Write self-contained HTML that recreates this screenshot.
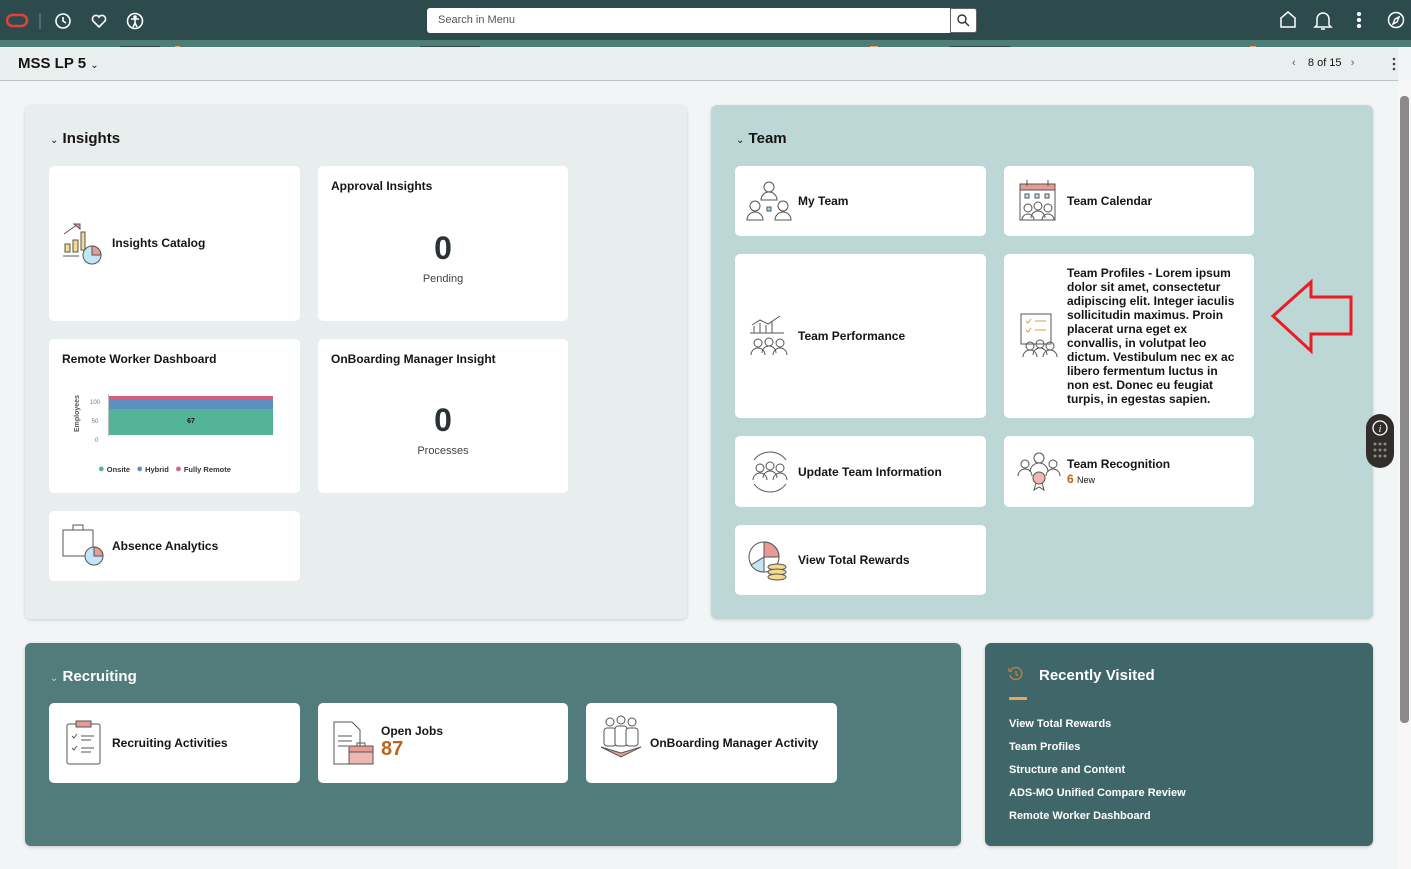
<!DOCTYPE html>
<html><head><meta charset="utf-8">
<style>
*{box-sizing:border-box;margin:0;padding:0}
body{width:1411px;height:869px;overflow:hidden;background:#f2f5f5;font-family:"Liberation Sans",sans-serif;position:relative;color:#161513}
.a{position:absolute}
.top{left:0;top:0;width:1411px;height:40px;background:#2d4a4d}
.strip{left:0;top:40px;width:1411px;height:7px;background:#4e7d78}
.hdr{left:0;top:47px;width:1398px;height:34px;background:#e8efee;border-bottom:1px solid #b8c2c2}
.panel{border-radius:6px}
.tile{background:#fff;border-radius:5px;position:absolute}
.tt{font-size:12px;font-weight:bold;color:#161513}
.sec{font-size:15px;font-weight:bold}
.rv a{display:block;color:#fff;font-size:11px;font-weight:bold;margin-bottom:10px;text-decoration:none}
</style></head><body>
<div class="a top"></div>
<div class="a strip">
<svg width="1411" height="7"><g fill="#e8a45a"><rect x="175" y="0" width="5" height="7"/><rect x="590" y="2" width="30" height="5"/><rect x="870" y="0" width="8" height="7"/><rect x="1250" y="0" width="6" height="7"/></g><g fill="#a9c7bf"><rect x="60" y="2" width="30" height="5"/><rect x="380" y="3" width="20" height="4"/><rect x="720" y="2" width="30" height="5"/><rect x="1150" y="1" width="25" height="6"/></g><g fill="#2d4a4d"><rect x="120" y="0" width="40" height="3"/><rect x="420" y="0" width="60" height="3"/><rect x="950" y="0" width="60" height="3"/></g></svg>
</div>
<!-- top bar icons -->
<svg class="a" style="left:6px;top:11px" width="160" height="20" fill="none" stroke="#fff" stroke-width="1.6">
<rect x="1" y="4" width="20" height="11" rx="5.5" stroke="#e0433a" stroke-width="2.5"/>
<line x1="34" y1="2" x2="34" y2="18" stroke="#7b8c8c" stroke-width="1"/>
<circle cx="57" cy="10" r="7"/><path d="M57 6v4l3 2"/>
<path d="M93 16l-6-6a3.5 3.5 0 0 1 6-4a3.5 3.5 0 0 1 6 4z"/>
<circle cx="129" cy="10" r="7.5"/><circle cx="129" cy="6" r="1" fill="#fff"/><path d="M125 8h8M129 8v4l-2 4M129 12l2 4"/>
</svg>
<div class="a" style="left:427px;top:8px;width:524px;height:25px;background:#fff;border-radius:3px 0 0 3px;font-size:11px;color:#555;padding:6px 11px">Search in Menu</div>
<div class="a" style="left:950px;top:8px;width:27px;height:25px;background:#fff;border:1px solid #666;border-radius:0 3px 3px 0"></div>
<svg class="a" style="left:956px;top:13px" width="14" height="14" fill="none" stroke="#333" stroke-width="1.4"><circle cx="6" cy="6" r="4"/><path d="M9 9l4 4"/></svg>
<svg class="a" style="left:1275px;top:10px" width="130" height="22" fill="none" stroke="#fff" stroke-width="1.5">
<path d="M6 17V8l7-6 7 6v9z"/>
<path d="M42 15V9a6 6 0 0 1 12 0v6l2 2H40zM46 19h4"/>
<circle cx="84" cy="4" r="1.4" fill="#fff"/><circle cx="84" cy="10" r="1.4" fill="#fff"/><circle cx="84" cy="16" r="1.4" fill="#fff"/>
<circle cx="121" cy="10" r="7.5"/><path d="M124 7l-2 5-4 2 2-5z"/>
</svg>
<!-- header -->
<div class="a hdr"></div>
<div class="a" style="left:18px;top:55px;font-size:15px;font-weight:bold">MSS LP 5 <span style="font-size:10px;font-weight:normal">&#8964;</span></div>
<div class="a" style="left:1292px;top:57px;font-size:11px;color:#161513"><span style="color:#555">&lsaquo;</span>&nbsp;&nbsp;&nbsp; 8 of 15 &nbsp;&nbsp;<span style="color:#555">&rsaquo;</span></div>
<svg class="a" style="left:1390px;top:56px" width="8" height="16" fill="#444"><circle cx="4" cy="3" r="1.3"/><circle cx="4" cy="8" r="1.3"/><circle cx="4" cy="13" r="1.3"/></svg>
<!-- scrollbar -->
<div class="a" style="left:1398px;top:81px;width:13px;height:788px;background:#f7f7f7"></div>
<div class="a" style="left:1400px;top:96px;width:9px;height:627px;background:#8a8a8a;border-radius:4px"></div>

<!-- Insights -->
<div class="a panel" style="left:25px;top:105px;width:662px;height:514px;background:#e8eeed;box-shadow:0 1px 3px rgba(0,0,0,.15)"></div>
<div class="a sec" style="left:50px;top:130px"><span style="font-size:10px;font-weight:normal">&#8964;</span> Insights</div>
<div class="tile" style="left:49px;top:166px;width:251px;height:155px"></div>
<svg class="a" style="left:62px;top:222px" width="42" height="44" fill="none" stroke="#555" stroke-width="1"><path d="M2 12l14-10" /><path d="M12 2h6v5z" fill="#e89a94"/><rect x="3" y="22" width="5" height="8" fill="#f6da8c"/><rect x="11" y="18" width="5" height="12" fill="#f6da8c"/><rect x="19" y="10" width="4" height="18" fill="#f6da8c"/><path d="M1 34h16"/><circle cx="30" cy="33" r="9" fill="#c2e5f7"/><path d="M30 24v9h9a9 9 0 0 0-9-9z" fill="#e89a94"/></svg>
<div class="a tt" style="left:112px;top:236px">Insights Catalog</div>
<div class="tile" style="left:318px;top:166px;width:250px;height:155px"></div>
<div class="a tt" style="left:331px;top:179px">Approval Insights</div>
<div class="a" style="left:318px;top:230px;width:250px;text-align:center;font-size:32px;font-weight:bold;color:#2b3236">0</div>
<div class="a" style="left:318px;top:273px;width:250px;text-align:center;font-size:11px;color:#444">Pending</div>
<div class="tile" style="left:49px;top:339px;width:251px;height:154px"></div>
<div class="a tt" style="left:62px;top:352px">Remote Worker Dashboard</div>
<div class="a" style="left:74px;top:390px;font-size:7px;font-weight:bold;color:#555;transform:rotate(-90deg);transform-origin:0 0;top:432px">Employees</div>
<div class="a" style="left:90px;top:394px;font-size:6px;color:#777;line-height:19px">100<br>&nbsp;50<br>&nbsp;&nbsp;&nbsp;0</div>
<div class="a" style="left:109px;top:396px;width:164px;height:3px;background:#d4607f"></div>
<div class="a" style="left:109px;top:399px;width:164px;height:10px;background:#5d8fc0"></div>
<div class="a" style="left:109px;top:409px;width:164px;height:26px;background:#52b397;font-size:7px;text-align:center;line-height:26px;font-weight:bold">67</div>
<div class="a" style="left:108px;top:394px;width:1px;height:42px;background:#bbb"></div>
<div class="a" style="left:98px;top:463px;font-size:7.5px;color:#333;font-weight:bold"><span style="color:#52b397;font-size:11px">&#9679;</span> Onsite &nbsp;&nbsp;<span style="color:#5d8fc0;font-size:11px">&#9679;</span> Hybrid &nbsp;&nbsp;<span style="color:#d4607f;font-size:11px">&#9679;</span> Fully Remote</div>
<div class="tile" style="left:318px;top:339px;width:250px;height:154px"></div>
<div class="a tt" style="left:331px;top:352px">OnBoarding Manager Insight</div>
<div class="a" style="left:318px;top:402px;width:250px;text-align:center;font-size:32px;font-weight:bold;color:#2b3236">0</div>
<div class="a" style="left:318px;top:445px;width:250px;text-align:center;font-size:11px;color:#444">Processes</div>
<div class="tile" style="left:49px;top:511px;width:251px;height:70px"></div>
<svg class="a" style="left:61px;top:522px" width="44" height="46" fill="none" stroke="#555" stroke-width="1"><rect x="2" y="8" width="30" height="26" fill="#fff"/><path d="M12 8V3h10v5"/><circle cx="33" cy="34" r="9" fill="#c2e5f7"/><path d="M33 25v9h9a9 9 0 0 0-9-9z" fill="#e89a94"/></svg>
<div class="a tt" style="left:112px;top:539px">Absence Analytics</div>

<!-- Team -->
<div class="a panel" style="left:711px;top:105px;width:662px;height:514px;background:#bcd7d6;box-shadow:0 1px 3px rgba(0,0,0,.15)"></div>
<div class="a sec" style="left:736px;top:130px"><span style="font-size:10px;font-weight:normal">&#8964;</span> Team</div>
<div class="tile" style="left:735px;top:166px;width:251px;height:70px"></div>
<svg class="a" style="left:746px;top:180px" width="46" height="42" fill="none" stroke="#555" stroke-width="1"><circle cx="23" cy="7" r="5"/><path d="M15 20a8 8 0 0 1 16 0z"/><circle cx="9" cy="26" r="5"/><path d="M1 40a8 8 0 0 1 16 0z"/><circle cx="37" cy="26" r="5"/><path d="M29 40a8 8 0 0 1 16 0z"/><rect x="21" y="27" width="4" height="4" fill="#a6d3ef"/></svg>
<div class="a tt" style="left:798px;top:194px">My Team</div>
<div class="tile" style="left:1004px;top:166px;width:250px;height:70px"></div>
<svg class="a" style="left:1018px;top:180px" width="40" height="42" fill="none" stroke="#555" stroke-width="1"><rect x="2" y="4" width="35" height="36" fill="#fff"/><rect x="2" y="4" width="35" height="6" fill="#e89a94"/><rect x="7" y="14" width="4" height="4" fill="#c2e5f7"/><rect x="17" y="14" width="4" height="4" fill="#c2e5f7"/><rect x="27" y="14" width="4" height="4" fill="#c2e5f7"/><circle cx="10" cy="28" r="4"/><circle cx="20" cy="26" r="4"/><circle cx="30" cy="28" r="4"/><path d="M4 40a6 6 0 0 1 12 0M13 38a7 7 0 0 1 14 0M24 40a6 6 0 0 1 12 0"/><path d="M9 0v6M30 0v6"/></svg>
<div class="a tt" style="left:1067px;top:194px">Team Calendar</div>
<div class="tile" style="left:735px;top:254px;width:251px;height:164px"></div>
<svg class="a" style="left:748px;top:313px" width="42" height="44" fill="none" stroke="#555" stroke-width="1"><path d="M6 20V13M12 20V10M18 20V12M24 20V8M2 20h34M4 12l8-5 8 4 12-8"/><circle cx="10" cy="30" r="4"/><circle cx="21" cy="29" r="4"/><circle cx="32" cy="30" r="4"/><path d="M3 42a7 7 0 0 1 14 0M14 40a7 7 0 0 1 14 0M25 42a7 7 0 0 1 14 0"/></svg>
<div class="a tt" style="left:798px;top:329px">Team Performance</div>
<div class="tile" style="left:1004px;top:254px;width:250px;height:164px"></div>
<svg class="a" style="left:1018px;top:312px" width="42" height="46" fill="none" stroke="#555" stroke-width="1"><rect x="3" y="2" width="30" height="30" fill="#fff"/><path d="M8 9l2 2 3-4M8 18l2 2 3-4M17 9h11M17 18h11" stroke="#c9a24e"/><circle cx="12" cy="34" r="4"/><circle cx="22" cy="32" r="4"/><circle cx="32" cy="34" r="4"/><path d="M5 45a7 7 0 0 1 14 0M15 43a7 7 0 0 1 14 0M25 45a7 7 0 0 1 14 0"/></svg>
<div class="a tt" style="left:1067px;top:266px;width:170px;line-height:14px">Team Profiles - Lorem ipsum dolor sit amet, consectetur adipiscing elit. Integer iaculis sollicitudin maximus. Proin placerat urna eget ex convallis, in volutpat leo dictum. Vestibulum nec ex ac libero fermentum luctus in non est. Donec eu feugiat turpis, in egestas sapien.</div>
<div class="tile" style="left:735px;top:436px;width:251px;height:71px"></div>
<svg class="a" style="left:748px;top:448px" width="44" height="46" fill="none" stroke="#555" stroke-width="1"><path d="M6 12a20 20 0 0 1 32 0M38 36a20 20 0 0 1-32 0"/><circle cx="12" cy="20" r="4"/><circle cx="22" cy="18" r="4"/><circle cx="32" cy="20" r="4"/><path d="M5 32a7 7 0 0 1 14 0M15 30a7 7 0 0 1 14 0M25 32a7 7 0 0 1 14 0"/></svg>
<div class="a tt" style="left:798px;top:465px">Update Team Information</div>
<div class="tile" style="left:1004px;top:436px;width:250px;height:71px"></div>
<svg class="a" style="left:1016px;top:450px" width="46" height="42" fill="none" stroke="#555" stroke-width="1"><circle cx="23" cy="8" r="5"/><path d="M14 22a9 9 0 0 1 18 0"/><circle cx="9" cy="14" r="4"/><circle cx="37" cy="14" r="4"/><path d="M2 26a7 7 0 0 1 14 0M30 26a7 7 0 0 1 14 0"/><circle cx="23" cy="28" r="6" fill="#f0b7b1"/><path d="M20 33l-2 7 5-3 5 3-2-7"/></svg>
<div class="a tt" style="left:1067px;top:457px">Team Recognition</div>
<div class="a" style="left:1067px;top:472px;font-size:12px;font-weight:bold;color:#b9651b">6 <span style="font-size:9px;color:#161513;font-weight:normal">New</span></div>
<div class="tile" style="left:735px;top:525px;width:251px;height:70px"></div>
<svg class="a" style="left:746px;top:539px" width="46" height="42" fill="none" stroke="#555" stroke-width="1"><circle cx="18" cy="18" r="15" fill="#fff"/><path d="M18 18V3a15 15 0 0 1 15 15z" fill="#e89a94"/><path d="M18 18L5 26a15 15 0 0 0 13 7z" fill="#c2e5f7"/><ellipse cx="31" cy="28" rx="9" ry="3" fill="#f6da8c"/><ellipse cx="31" cy="33" rx="9" ry="3" fill="#f6da8c"/><ellipse cx="31" cy="38" rx="9" ry="3" fill="#f6da8c"/></svg>
<div class="a tt" style="left:798px;top:553px">View Total Rewards</div>
<svg class="a" style="left:1270px;top:278px" width="86" height="78"><polygon points="3,38 41,4 41,19 81,19 81,56 41,56 41,73" fill="none" stroke="#ec1c24" stroke-width="3"/></svg>
<div class="a" style="left:1366px;top:414px;width:28px;height:54px;background:#312d2a;border-radius:14px"></div>
<svg class="a" style="left:1370px;top:418px" width="20" height="46"><circle cx="10" cy="10" r="7" fill="none" stroke="#fff" stroke-width="1.3"/><text x="10" y="14" font-size="10" fill="#fff" text-anchor="middle" font-style="italic" font-family="Liberation Serif">i</text><g fill="#888"><circle cx="5" cy="26" r="1.5"/><circle cx="10" cy="26" r="1.5"/><circle cx="15" cy="26" r="1.5"/><circle cx="5" cy="32" r="1.5"/><circle cx="10" cy="32" r="1.5"/><circle cx="15" cy="32" r="1.5"/><circle cx="5" cy="38" r="1.5"/><circle cx="10" cy="38" r="1.5"/><circle cx="15" cy="38" r="1.5"/></g></svg>

<!-- Recruiting -->
<div class="a panel" style="left:25px;top:643px;width:936px;height:203px;background:#527b7b;box-shadow:0 1px 3px rgba(0,0,0,.2)"></div>
<div class="a sec" style="left:50px;top:668px;color:#fff"><span style="font-size:10px;font-weight:normal;color:#8fb">&#8964;</span> Recruiting</div>
<div class="tile" style="left:49px;top:703px;width:251px;height:80px"></div>
<svg class="a" style="left:64px;top:720px" width="40" height="46" fill="none" stroke="#555" stroke-width="1"><rect x="3" y="4" width="33" height="40" rx="2" fill="#fff"/><rect x="12" y="1" width="15" height="6" fill="#e89a94"/><path d="M8 16l2 2 3-4M8 28l2 2 3-4M17 16h13M17 20h10M17 28h13M17 32h10"/></svg>
<div class="a tt" style="left:112px;top:736px">Recruiting Activities</div>
<div class="tile" style="left:318px;top:703px;width:250px;height:80px"></div>
<svg class="a" style="left:331px;top:720px" width="46" height="46" fill="none" stroke="#555" stroke-width="1"><path d="M3 2h18l8 8v34H3z" fill="#fff"/><path d="M7 16h14M7 21h14M7 26h10"/><rect x="18" y="26" width="24" height="18" fill="#f0b7b1"/><rect x="18" y="26" width="24" height="6" fill="#e89a94"/><path d="M26 26v-3h8v3"/></svg>
<div class="a tt" style="left:381px;top:724px">Open Jobs</div>
<div class="a" style="left:381px;top:738px;font-size:20px;font-weight:bold;color:#b9651b">87</div>
<div class="tile" style="left:586px;top:703px;width:251px;height:80px"></div>
<svg class="a" style="left:598px;top:715px" width="46" height="46" fill="none" stroke="#555" stroke-width="1"><circle cx="12" cy="7" r="4"/><circle cx="23" cy="5" r="4"/><circle cx="34" cy="7" r="4"/><rect x="6" y="13" width="12" height="18" rx="3" fill="#fff"/><rect x="17" y="11" width="12" height="20" rx="3" fill="#fff"/><rect x="28" y="13" width="12" height="18" rx="3" fill="#fff"/><path d="M3 32l20 10 20-10-20 6z" fill="#e89a94"/></svg>
<div class="a tt" style="left:650px;top:736px">OnBoarding Manager Activity</div>

<!-- Recently visited -->
<div class="a panel" style="left:985px;top:643px;width:388px;height:203px;background:#3f676a;box-shadow:0 1px 3px rgba(0,0,0,.2)"></div>
<svg class="a" style="left:1008px;top:666px" width="16" height="16" fill="none" stroke="#c77b45" stroke-width="1.4"><path d="M3 4a6 6 0 1 1-1 5"/><path d="M1 2v3h3"/><path d="M8 5v3l2 2"/></svg>
<div class="a" style="left:1039px;top:667px;font-size:15px;font-weight:bold;color:#fff">Recently Visited</div>
<div class="a" style="left:1009px;top:697px;width:18px;height:3px;background:#e8a45a"></div>
<div class="a rv" style="left:1009px;top:718px;line-height:13px">
<a>View Total Rewards</a><a>Team Profiles</a><a>Structure and Content</a><a>ADS-MO Unified Compare Review</a><a>Remote Worker Dashboard</a>
</div>
</body></html>
